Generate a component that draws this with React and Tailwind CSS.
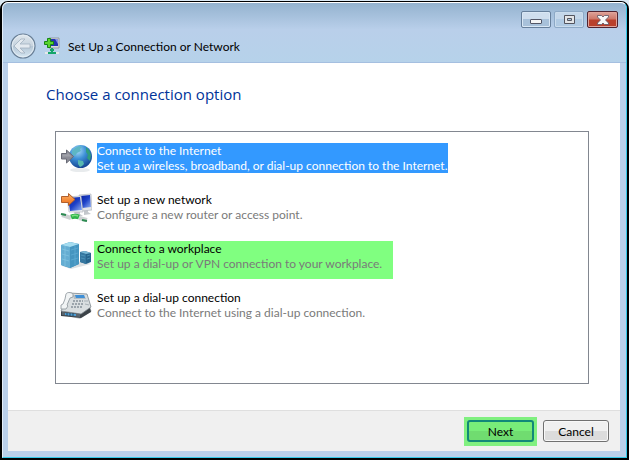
import React, { useState } from "react";

const GlobeIcon = () => (
  <svg width="32" height="32" viewBox="0 0 32 32" aria-hidden="true">
    <defs>
      <radialGradient id="globe" cx="0.38" cy="0.25" r="0.8">
        <stop offset="0" stopColor="#a9dcf8" />
        <stop offset="0.45" stopColor="#3c8fd6" />
        <stop offset="1" stopColor="#123f8c" />
      </radialGradient>
    </defs>
    <ellipse cx="20" cy="27" rx="10" ry="2" fill="#e8ebed" />
    <circle cx="20.500" cy="13.500" r="11.500" fill="url(#globe)" />
    <path d="M12 8l3-3 4-2 3 1-2 2 1 2-4 2-2 3-3-2z" fill="#5db6c4" />
    <path d="M26 4l3 3 2 5-1 6-3-3 1-3-2-3 0-5z" fill="#2f9c80" />
    <path d="M18 17l5 1 1 3-2 2-2 1-2-3z" fill="#57b8b0" />
    <path d="M1.500 10.500h5V7l7 6.500-7 6.500v-4h-5z" fill="#8b8c96" stroke="#696b76" />
    <path d="M2.500 11.500h5V9.500l4 4h-9z" fill="#a0a1a9" />
  </svg>
);

const NetworkIcon = () => (
  <svg width="32" height="32" viewBox="0 0 32 32" aria-hidden="true">
    <defs>
      <linearGradient id="screen" x1="0" y1="0" x2="1" y2="1">
        <stop offset="0" stopColor="#0a1e9c" />
        <stop offset="0.5" stopColor="#1d41c8" />
        <stop offset="1" stopColor="#93b2f2" />
      </linearGradient>
      <linearGradient id="orange" x1="0" y1="0" x2="0" y2="1">
        <stop offset="0" stopColor="#ffb469" />
        <stop offset="1" stopColor="#ec6a14" />
      </linearGradient>
    </defs>
    <path d="M24 17l4 1v2l3 2-7 1z" fill="#c4c8cc" />
    <path d="M19 3l12-1 1 16-10 1z" fill="#e5e6e9" stroke="#abb0b8" strokeWidth="0.6" />
    <path d="M20 4l10-1 1 12-9 1z" fill="url(#screen)" />
    <path d="M14 19l6 1v2l3 2-8 1z" fill="#c4c8cc" />
    <path d="M7 5l14-1 2 16-14 0z" fill="#eceef0" stroke="#abb0b8" strokeWidth="0.6" />
    <path d="M8 6l12-1 2 13-12 1z" fill="url(#screen)" />
    <path d="M2 23l9 3M19 26l8 2" fill="none" stroke="#cdd1d2" strokeWidth="4" />
    <path d="M1 22l5 1M22 28l5 1" fill="none" stroke="#2c8b51" strokeWidth="2" />
    <path d="M11 25c3-1 5-1 8 0" fill="none" stroke="#2fb34a" strokeWidth="5" />
    <path d="M12 24c2-1 4-1 6 0" fill="none" stroke="#7be07f" strokeWidth="1.5" />
    <path d="M1.500 4.500h7V1.500L15 7.500l-6.500 6v-3h-7z" fill="url(#orange)" stroke="#b0602f" />
  </svg>
);

const ServerIcon = () => (
  <svg width="32" height="32" viewBox="0 0 32 32" aria-hidden="true">
    <path d="M2 25l9 3 20-5-9-3z" fill="#dce0e3" />
    <path d="M1 4l9-3 9 2v20l-9 4-9-3z" fill="#3f91bd" />
    <path d="M1 4l9 2v21l-9-3z" fill="#64add2" />
    <path d="M10 6l9-3v20l-9 4z" fill="#4595c0" />
    <path d="M1 4l9-3 9 2-9 3z" fill="#a4dcf0" />
    <path d="M2 8l7 2M2 13l7 2M2 18l7 2M5 5v20" stroke="#8acbe6" strokeWidth="0.6" />
    <path d="M11 9l7-2M11 14l7-2M11 19l7-2M15 5v19" stroke="#64b2d8" strokeWidth="0.6" />
    <path d="M20 11l5-1 6 2v9l-5 2-6-2z" fill="#27658e" />
    <path d="M20 11l6 2v10l-6-2z" fill="#3577a0" />
    <path d="M20 11l5-1 6 2-5 1z" fill="#7ab8d5" />
    <path d="M21 14l4 1M21 17l4 1M27 15l3-1M27 18l3-1" stroke="#5aa4c8" strokeWidth="0.6" />
  </svg>
);

const PhoneIcon = () => (
  <svg width="32" height="32" viewBox="0 0 32 32" aria-hidden="true">
    <path d="M3 25l17 4 12-8-2-2-20 3z" fill="#c9cdcf" />
    <path d="M1 21l20 2 9-6 1 5-10 6-20-2z" fill="#3b4248" />
    <path d="M9 3l18 1 4 13-10 7-20-3 4-8z" fill="#d9dee0" stroke="#7e878d" strokeWidth="0.8" />
    <path d="M13 5l11 0 2 4-12 0z" fill="#b5bdc2" />
    <path d="M15 5h9l1 3h-9z" fill="#3f8fd6" />
    <path d="M2 22l18 2v3L2 25z" fill="#59656e" />
    <path d="M5 23l11 1v2L5 25z" fill="#4b9fd8" />
    <path d="M7 23v3M10 23v3M13 23v3" stroke="#21465e" />
    <path d="M6 4c1-2 5-2 7 0l0 3-3 1-3 7 1 1-2 3-5 0 0-4 2-1 2-5z" fill="#f1f4f5" stroke="#899298" strokeWidth="0.8" />
    <path d="M13 11h10M12 14h12M11 17h11" stroke="#88939a" strokeWidth="1.5" strokeDasharray="2 1" />
    <path d="M24 11l4 0M25 14l4 1" stroke="#a6afb5" />
  </svg>
);

const WizardIcon = () => (
  <svg width="16" height="18" viewBox="0 0 16 18" aria-hidden="true">
    <path d="M5 1h10v10H5z" fill="#d7dbdf" stroke="#858b94" strokeWidth="0.8" />
    <path d="M6 2h8v7H6z" fill="#2433b0" />
    <path d="M11 2h3v5z" fill="#8093e2" />
    <path d="M1 16h14" stroke="#e4e8e8" strokeWidth="2" />
    <path d="M8 11v5M4 16h8M6 13h4" stroke="#16a56a" strokeWidth="2" />
    <path d="M3.500 1.500h3v3h3v3h-3v3h-3v-3h-3v-3h3z" fill="#59d42d" stroke="#178516" />
  </svg>
);

const BackIcon = () => (
  <svg width="26" height="26" viewBox="0 0 26 26" aria-hidden="true">
    <defs>
      <linearGradient id="back" x1="0" y1="0" x2="0" y2="1">
        <stop offset="0" stopColor="#e1e8ee" />
        <stop offset="0.48" stopColor="#c7d3de" />
        <stop offset="0.5" stopColor="#b4c5d4" />
        <stop offset="1" stopColor="#d7e8f4" />
      </linearGradient>
    </defs>
    <circle cx="13" cy="13" r="12" fill="url(#back)" stroke="#687e95" strokeWidth="1.2" />
    <circle cx="13" cy="13" r="10.800" fill="none" stroke="#e4edf4" />
    <path d="M11 6h4l-5 5h10v4H10l5 5h-4l-7-7z" fill="#e4eaf0" stroke="#a2b1c0" strokeWidth="0.8" strokeLinejoin="round" />
  </svg>
);

const options = [
  {
    id: "internet",
    title: "Connect to the Internet",
    text: "Set up a wireless, broadband, or dial-up connection to the Internet.",
    icon: GlobeIcon,
  },
  {
    id: "network",
    title: "Set up a new network",
    text: "Configure a new router or access point.",
    icon: NetworkIcon,
  },
  {
    id: "workplace",
    title: "Connect to a workplace",
    text: "Set up a dial-up or VPN connection to your workplace.",
    icon: ServerIcon,
    marked: true,
  },
  {
    id: "dialup",
    title: "Set up a dial-up connection",
    text: "Connect to the Internet using a dial-up connection.",
    icon: PhoneIcon,
  },
];

const OptionRow = ({ option, selected, onSelect }) => {
  const Icon = option.icon;

  return (
    <button
      type="button"
      role="option"
      aria-selected={selected}
      onClick={() => onSelect(option.id)}
      className="flex h-[49px] w-full items-start gap-[2px] text-left"
    >
      <span className="shrink-0">
        <Icon />
      </span>
      <span className={option.marked ? "bg-[#80ff80] pr-[11px] pb-2 pl-[3px]" : "px-[3px]"}>
        <span className={`block ${selected ? "bg-[#3399ff] text-white" : "text-black"}`}>
          <span className="block">{option.title}</span>
          <span className={`block ${selected ? "text-white" : "text-[#7a7a7a]"}`}>
            {option.text}
          </span>
        </span>
      </span>
    </button>
  );
};

const App = () => {
  const [selected, setSelected] = useState("internet");

  return (
    <div className="flex min-h-screen flex-col bg-[#dceaf4] pt-px font-[family-name:Lato,'Open_Sans',sans-serif] text-[12px] leading-[15px] text-black">
      <div className="flex flex-1 flex-col rounded-t-lg border-x-2 border-t border-b-2 border-black bg-[#bad0ea]">
        <div className="flex flex-1 flex-col rounded-t-md border border-t-white border-r-[#35c9e8] border-b-[#35c9e8] border-l-[#e4eef8] pr-[6px] pb-[6px] pl-[5px]">
          {/* Title bar */}
          <header className="-mr-[6px] -ml-[5px] rounded-t-md border-b border-[#a5bfe0] bg-linear-to-b from-[#94b3cf] via-[#b9cfea] via-45% to-[#b6d2ea] px-[5px] pb-[3px]">
            <div className="flex justify-end gap-[3px] pt-2 pr-[3px]">
              <button
                type="button"
                aria-label="Minimize"
                className="flex h-[17px] w-[30px] items-center justify-center rounded-[2px] border border-[#667f9b] bg-linear-to-b from-[#cfdeee] from-50% to-[#a8c1da] to-50% inset-ring inset-ring-[#d9e7f5]"
              >
                <svg width="12" height="13" viewBox="0 0 12 13">
                  <rect x="0.5" y="6.5" width="11" height="4" rx="0.5" fill="#f5f5f5" stroke="#535666" />
                </svg>
              </button>
              <button
                type="button"
                aria-label="Maximize"
                className="flex h-[17px] w-[30px] items-center justify-center rounded-[2px] border border-[#8da9c6] bg-linear-to-b from-[#c4d7ea] from-50% to-[#b0cae3] to-50% inset-ring inset-ring-[#cadced]"
              >
                <svg width="11" height="9" viewBox="0 0 11 9">
                  <path d="M.5.5h10v8H.5zM3.500 3.500v2h4v-2z" fill="#e3e5e7" fillRule="evenodd" stroke="#53555f" />
                </svg>
              </button>
              <button
                type="button"
                aria-label="Close"
                className="flex h-[17px] w-[31px] items-center justify-center rounded-[2px] border border-[#502330] bg-linear-to-b from-[#dda299] from-0% via-[#cd7668] via-48% to-[#b9402c] to-52% inset-ring inset-ring-[#e0a49b]"
              >
                <svg width="12" height="10" viewBox="0 0 12 10">
                  <path d="M.5.5h4L6 2 7.500.5h4V2L8.500 5l3 3v1.500h-4L6 8 4.500 9.500h-4V8l3-3-3-3z" fill="#f8f8f8" stroke="#5b5464" strokeWidth="0.8" />
                </svg>
              </button>
            </div>
            <div className="flex items-center gap-2 pt-[5px] pl-[2px]">
              <button type="button" aria-label="Back">
                <BackIcon />
              </button>
              <WizardIcon />
              <h1>Set Up a Connection or Network</h1>
            </div>
          </header>

          <main className="flex-1 bg-white pt-[22px] pr-[31px] pb-[26px] pl-[47px]">
            <h2 className="-ml-[9px] font-[family-name:'Open_Sans',sans-serif] text-[15px] leading-[18px] text-[#003399]">
              Choose a connection option
            </h2>
            <div
              role="listbox"
              aria-label="Choose a connection option"
              className="mt-7 h-[253px] border border-[#828790] pt-[11px] pl-1"
            >
              {options.map((option) => (
                <OptionRow
                  key={option.id}
                  option={option}
                  selected={selected === option.id}
                  onSelect={setSelected}
                />
              ))}
            </div>
          </main>

          {/* Footer buttons */}
          <footer className="flex justify-end gap-[6px] border-t border-[#dfdfdf] bg-[#f0f0f0] pt-[6px] pr-[11px] pb-[5px]">
            <div className="bg-[#80f080] px-[3px] pt-[3px] pb-1">
              <button
                type="button"
                className="block h-[22px] w-[67px] rounded-[3px] border-2 border-[#118879] bg-linear-to-b from-[#79ed79] from-50% to-[#70dc70] to-50%"
              >
                Next
              </button>
            </div>
            <button
              type="button"
              className="mt-[3px] h-[22px] w-[66px] rounded-[3px] border border-[#707070] bg-linear-to-b from-[#f0f0f0] from-50% to-[#dcdcdc] to-50% inset-ring inset-ring-[#f8f8f8]"
            >
              Cancel
            </button>
          </footer>
        </div>
      </div>
    </div>
  );
};

export default App;
